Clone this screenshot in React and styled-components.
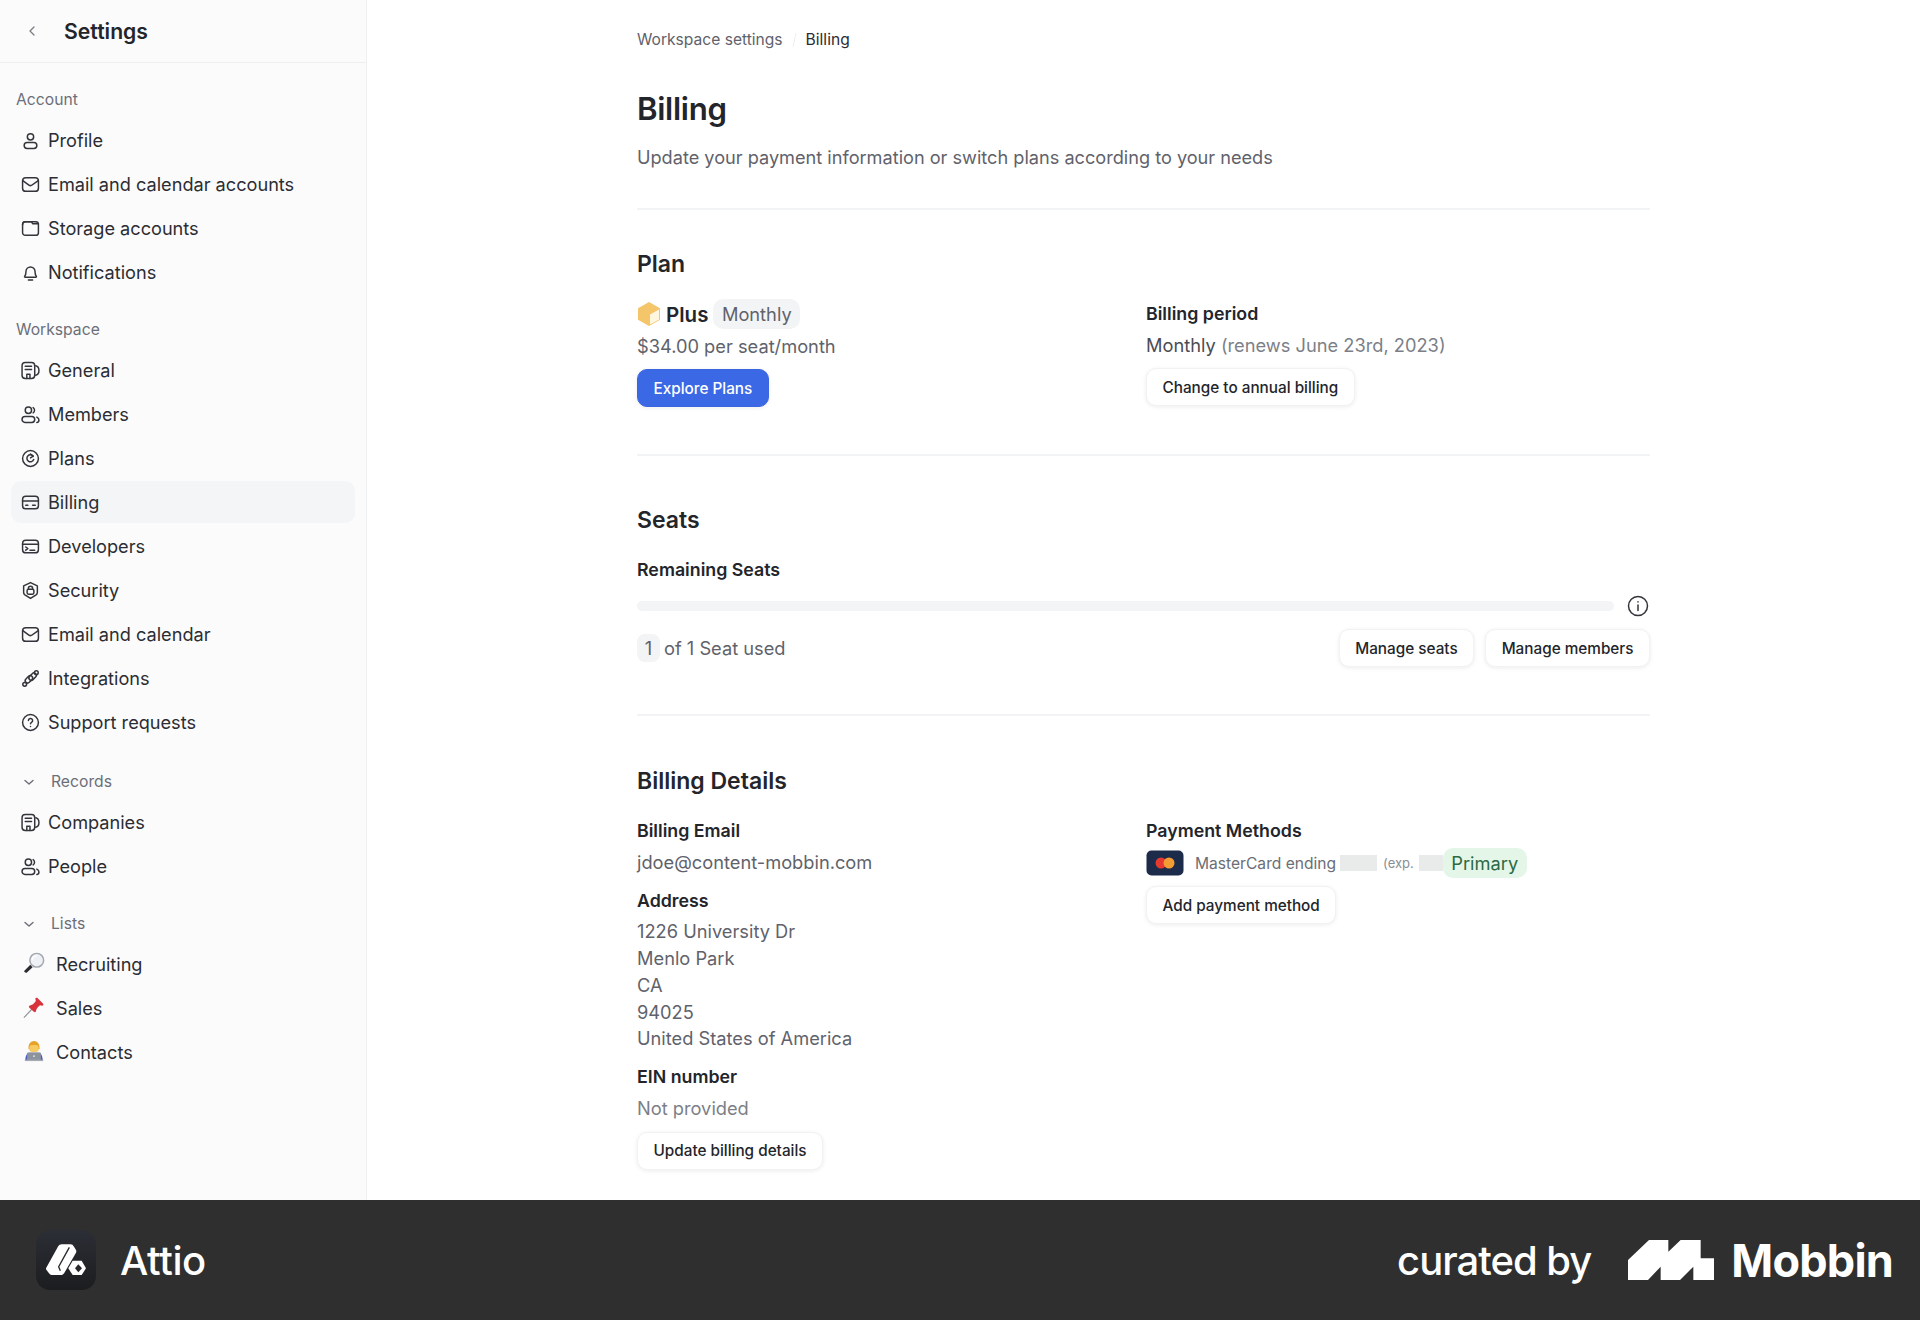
import React from 'react';
import styled, { createGlobalStyle } from 'styled-components';

const Global = createGlobalStyle`
  html, body { margin: 0; padding: 0; background: #fff; }
  body { font-family: Inter, "Noto Sans", sans-serif; color: #23252b; -webkit-font-smoothing: antialiased; }
`;

const Page = styled.div`
  width: 1920px;
  height: 1320px;
  display: flex;
  flex-direction: column;
`;
const Body = styled.div`
  height: 1200px;
  display: flex;
`;
const Sidebar = styled.aside`
  width: 367px;
  flex: none;
  background: #fbfbfc;
  border-right: 1px solid #eeeff1;
  box-sizing: border-box;
`;
const SideHead = styled.div`
  height: 63px;
  box-sizing: border-box;
  border-bottom: 1px solid #eeeff1;
  display: flex;
  align-items: center;
  padding-left: 26px;
  gap: 26px;
  color: #7a7d85;
`;
const SideTitle = styled.div`
  font-size: 21.2px;
  font-weight: 600;
  color: #23252b;
`;
const SideNav = styled.nav`
  padding: 24px 11px 0;
`;
const SectionLabel = styled.div`
  height: 26px;
  line-height: 26px;
  font-size: 15.7px;
  color: #6c6f78;
  padding-left: ${p => (p.$caret ? '12px' : '5px')};
  margin-top: ${p => p.$top || 0}px;
  margin-bottom: 5px;
  display: flex;
  align-items: center;
  gap: 16px;
`;
const Item = styled.div`
  height: 44px;
  display: flex;
  align-items: center;
  gap: ${p => (p.$emoji ? '11px' : '8px')};
  padding-left: 10px;
  font-size: 18.15px;
  color: #2b2d33;
  position: relative;
  z-index: 0;
  ${p => p.$active && `
    &::before {
      content: '';
      position: absolute;
      z-index: -1;
      left: 0; right: 0; top: 1px; bottom: 1px;
      border-radius: 10px;
      background: #f4f5f6;
    }
  `}
`;
const ItemIcon = styled.svg`
  width: 19px;
  height: 19px;
  flex: none;
  fill: none;
  stroke: #33353b;
  stroke-width: 1.4;
  stroke-linecap: round;
  stroke-linejoin: round;
`;
const Emoji = styled.svg`
  width: 22px;
  height: 22px;
  flex: none;
  margin-left: 2px;
  margin-top: -3px;
`;
const Main = styled.main`
  flex: 1;
  padding: 29px 0 0 270px;
`;
const Content = styled.div`
  width: 1013px;
`;
const Crumbs = styled.div`
  display: flex;
  align-items: center;
  font-size: 15.6px;
  line-height: 22px;
  color: #5f626b;
  gap: 11px;
`;
const CrumbCurrent = styled.span`
  color: #2b2d33;
`;
const CrumbSlash = styled.span`
  width: 1px;
  height: 14px;
  background: #eeeff1;
  transform: rotate(12deg);
`;
const H1 = styled.h1`
  margin: 37px 0 0;
  font-size: 31.2px;
  line-height: 42px;
  font-weight: 600;
  letter-spacing: -0.3px;
  color: #23252b;
`;
const Sub = styled.p`
  margin: 13px 0 0;
  font-size: 18.15px;
  line-height: 28px;
  color: #5f626b;
`;
const Section = styled.section`
  border-top: 2px solid #f2f3f4;
  margin-top: ${p => p.$top}px;
`;
const H2 = styled.h2`
  margin: ${p => p.$top || 39}px 0 0;
  font-size: 23px;
  line-height: 30px;
  font-weight: 600;
  color: #23252b;
`;
const Columns = styled.div`
  display: grid;
  grid-template-columns: 509px 504px;
  margin-top: 21px;
`;
const Col = styled.div`
  display: flex;
  flex-direction: column;
  align-items: flex-start;
`;
const Label = styled.div`
  font-size: 17.8px;
  line-height: 28px;
  font-weight: 600;
  color: #23252b;
  margin-top: ${p => p.$top || 0}px;
`;
const Text = styled.div`
  font-size: 18.25px;
  line-height: 26.7px;
  color: #5f626b;
  margin-top: ${p => p.$top || 0}px;
`;
const Dark = styled.span`
  color: #4a4c54;
`;
const Muted = styled.span`
  color: #7c7f87;
`;
const PlanRow = styled.div`
  display: flex;
  align-items: center;
  height: 30px;
  margin-top: -1px;
`;
const PlanName = styled.span`
  font-size: 20.5px;
  font-weight: 600;
  color: #23252b;
  margin: 0 5px 0 5px;
`;
const Tag = styled.span`
  height: 30px;
  line-height: 30px;
  padding: 0 8.5px;
  border-radius: 10px;
  font-size: 18.25px;
  background: ${p => p.$bg || '#f3f4f5'};
  color: ${p => p.$fg || '#5f626b'};
`;
const Button = styled.button`
  height: 38px;
  box-sizing: border-box;
  padding: 0 15.5px;
  font-family: inherit;
  font-size: 15.3px;
  font-weight: 500;
  border-radius: 10px;
  cursor: pointer;
  white-space: nowrap;
  margin-top: ${p => p.$top || 0}px;
  border: 1px solid ${p => (p.$primary ? '#3b66e0' : '#f1f2f3')};
  background: ${p => (p.$primary ? '#3b69e6' : '#fff')};
  color: ${p => (p.$primary ? '#fff' : '#23252b')};
  box-shadow: 0 1px 4px rgba(20, 25, 40, 0.08);
`;
const BarRow = styled.div`
  display: flex;
  align-items: center;
  justify-content: space-between;
  margin-top: 11px;
`;
const Bar = styled.div`
  width: 977px;
  height: 10px;
  border-radius: 5px;
  background: #f3f4f5;
`;
const InfoIcon = styled.svg`
  width: 22px;
  height: 22px;
  margin-right: 1px;
  fill: none;
  stroke: #33353b;
  stroke-width: 1.5;
  stroke-linecap: round;
`;
const SeatRow = styled.div`
  display: flex;
  align-items: center;
  justify-content: space-between;
  margin-top: 12px;
`;
const SeatText = styled.div`
  display: flex;
  align-items: center;
  font-size: 18.25px;
  color: #5f626b;
`;
const SeatCount = styled.span`
  width: 23px;
  height: 28px;
  line-height: 28px;
  text-align: center;
  border-radius: 8px;
  background: #f3f4f5;
  margin-right: 4px;
`;
const SeatButtons = styled.div`
  display: flex;
  gap: 11px;
`;
const PayRow = styled.div`
  display: flex;
  align-items: center;
  height: 30px;
  margin-top: 3px;
`;
const CardIcon = styled.svg`
  width: 38px;
  height: 26px;
  flex: none;
`;
const PayText = styled.span`
  font-size: 15.6px;
  color: #6b6e76;
  margin-left: 11px;
`;
const Redact = styled.span`
  display: inline-block;
  height: 16px;
  width: ${p => p.$w}px;
  background: #e9eaea;
  margin-left: ${p => p.$left}px;
`;
const PayExp = styled.span`
  font-size: 13px;
  color: #8b8e95;
  margin-left: 6px;
`;
const Footer = styled.footer`
  height: 120px;
  background: #2f2f2f;
  display: flex;
  align-items: center;
  justify-content: space-between;
  color: #fff;
  padding: 0 27px 0 36px;
`;
const Brand = styled.div`
  display: flex;
  align-items: center;
  gap: 24px;
`;
const AppLogo = styled.svg`
  width: 60px;
  height: 60px;
  flex: none;
`;
const AppName = styled.div`
  font-size: 40px;
  font-weight: 500;
  letter-spacing: -0.4px;
`;
const Curated = styled.div`
  display: flex;
  align-items: center;
`;
const CuratedText = styled.span`
  font-size: 40px;
  font-weight: 500;
  letter-spacing: -1px;
  margin-right: 37px;
`;
const MobbinMark = styled.svg`
  width: 86px;
  height: 40px;
  margin-right: 17px;
  fill: #fff;
`;
const MobbinName = styled.span`
  font-size: 45px;
  font-weight: 700;
  letter-spacing: -0.8px;
`;

const icons = {
  user: <><circle cx="9" cy="5.5" r="3" /><rect x="3" y="11" width="12" height="5.5" rx="2.75" /></>,
  mail: <><rect x="1.5" y="2.5" width="15" height="13" rx="3" /><path d="M2 5.5l5.5 4a2.5 2.5 0 0 0 3 0l5.5-4" /></>,
  folder: <><rect x="1.5" y="2.5" width="15" height="13" rx="2.5" /><path d="M1.5 5.5c0-1.5 1-3 2.5-3h6l1 2h5.5" /></>,
  bell: <><path d="M3.5 12.5c1-1 1.2-2.2 1.2-4.5a4.3 4.3 0 0 1 8.6 0c0 2.3.2 3.5 1.2 4.5.3.4 0 1-.5 1h-10c-.5 0-.8-.6-.5-1z" /><path d="M7 16h4" /></>,
  building: <><rect x="1" y="1.5" width="12" height="15" rx="3" /><path d="M14 4.500c2 .5 3 2.200 3 4.500s-1 4-3 4.500M4 5h6M4 8h6M5.500 16.500v-4h3v4" /></>,
  users: <><circle cx="7" cy="5" r="3" /><path d="M11.500 2.500a3 3 0 0 1 0 5" /><rect x="1" y="11" width="12" height="5.500" rx="2.750" /><path d="M15 11.500c1 .5 2 1.700 2 2.700 0 1.300-1 2.300-2 2.300" /></>,
  plans: <><circle cx="9" cy="9" r="7.500" /><path d="M11.500 6.800A3.300 3.300 0 1 0 12 10" /><path d="M9 4.800l2.600 2-2.600 1.600" /></>,
  card: <><rect x="1.500" y="3" width="15" height="12" rx="3" /><path d="M1.500 7.500h15M4.500 11.500h2M11 11.500h2.500" /></>,
  dev: <><rect x="1.500" y="3" width="15" height="12" rx="3" /><path d="M1.500 6.800h15M4.500 9.500l2 1.500-2 1.500M8.500 12.500h4.500" /></>,
  shield: <><path d="M9 1.500l6.500 3.200v6.200c0 1-.5 1.700-1.200 2.200L9 16.500l-5.300-3.400c-.7-.5-1.200-1.200-1.200-2.200V4.700z" /><rect x="5.800" y="7.800" width="6.400" height="4.700" rx="1.300" /><path d="M7 7.800V7a2 2 0 0 1 4 0v.8" /></>,
  link: <><rect x="3.500" y="7.500" width="8" height="4.500" rx="2.250" transform="rotate(-45 7.500 9.750)" /><rect x="7" y="5" width="8" height="4.500" rx="2.250" transform="rotate(-45 11 7.250)" /><circle cx="3.500" cy="14.500" r="1.800" /><circle cx="14.500" cy="3.500" r="1.800" /></>,
  help: <><circle cx="9" cy="9" r="7.500" /><path d="M7 7.200a2 2 0 1 1 3 1.700c-.7.4-1 .8-1 1.400" /><path d="M9 12.800v.1" /></>,
};

const Icon = ({ name }) => <ItemIcon viewBox="0 0 18 18">{icons[name]}</ItemIcon>;

const Caret = () => (
  <svg width="12" height="12" viewBox="0 0 12 12" fill="none" stroke="#6c6f78" strokeWidth="1.400" strokeLinecap="round" strokeLinejoin="round">
    <path d="M2 4.500L6 8l4-3.500" />
  </svg>
);

const Magnifier = () => (
  <Emoji viewBox="0 0 24 24">
    <path d="M1.500 20.500l6.500-6.500 2.500 2.500-6.500 6c-1 .9-3.500-.9-2.500-2z" fill="#2c2c30" />
    <circle cx="15" cy="9" r="7.500" fill="#eef1f5" stroke="#a3a8af" strokeWidth="1.600" />
    <path d="M10 9a5 5 0 0 1 5-5" stroke="#fff" strokeWidth="1.600" fill="none" />
  </Emoji>
);
const Pin = () => (
  <Emoji viewBox="0 0 24 24">
    <path d="M1 23.500l9-9.500" stroke="#8d9299" strokeWidth="1.300" />
    <path d="M7 10.500c3-.5 5-2 7-5l-.5-2.500c0-1 1-1.500 2-1l6.500 6.500c.6 1 0 2-1 2l-2.500-.5c-2.500 2-4 4-4.500 7-.4 1-1.500 1-2.200.3L7 12.700c-.7-.7-.8-1.800 0-2.200z" fill="#d8323c" />
  </Emoji>
);
const Coder = () => (
  <Emoji viewBox="0 0 24 24">
    <path d="M6 10C5.500 4 8.500 1 12 1s6.500 3 6 9z" fill="#e5a32a" />
    <rect x="7" y="5.500" width="10" height="7.500" rx="3" fill="#f8cb62" />
    <path d="M2.500 22.500c0-5 2-8.500 4-8.500h11c2 0 4 3.500 4 8.500z" fill="#4c5cc4" />
    <rect x="4.500" y="13.500" width="15" height="8.500" rx="1" fill="#8d939d" />
    <path d="M2 21.500h20v1.500H2z" fill="#a6abb3" />
    <circle cx="12" cy="17.500" r="1" fill="#e8e9ec" />
  </Emoji>
);

const Row = ({ icon, children, active }) => (
  <Item $active={active}><Icon name={icon} />{children}</Item>
);

export default function App() {
  return (
    <Page>
      <Global />
      <Body>
        <Sidebar>
          <SideHead>
            <svg width="12" height="12" viewBox="0 0 12 12" fill="none" stroke="#7a7d85" strokeWidth="1.300" strokeLinecap="round" strokeLinejoin="round"><path d="M8 2L4 6l4 4" /></svg>
            <SideTitle>Settings</SideTitle>
          </SideHead>
          <SideNav>
            <SectionLabel>Account</SectionLabel>
            <Row icon="user">Profile</Row>
            <Row icon="mail">Email and calendar accounts</Row>
            <Row icon="folder">Storage accounts</Row>
            <Row icon="bell">Notifications</Row>
            <SectionLabel $top={23}>Workspace</SectionLabel>
            <Row icon="building">General</Row>
            <Row icon="users">Members</Row>
            <Row icon="plans">Plans</Row>
            <Row icon="card" active>Billing</Row>
            <Row icon="dev">Developers</Row>
            <Row icon="shield">Security</Row>
            <Row icon="mail">Email and calendar</Row>
            <Row icon="link">Integrations</Row>
            <Row icon="help">Support requests</Row>
            <SectionLabel $top={25} $caret><Caret />Records</SectionLabel>
            <Row icon="building">Companies</Row>
            <Row icon="users">People</Row>
            <SectionLabel $top={23} $caret><Caret />Lists</SectionLabel>
            <Item $emoji><Magnifier />Recruiting</Item>
            <Item $emoji><Pin />Sales</Item>
            <Item $emoji><Coder />Contacts</Item>
          </SideNav>
        </Sidebar>
        <Main>
          <Content>
            <Crumbs>Workspace settings<CrumbSlash /><CrumbCurrent>Billing</CrumbCurrent></Crumbs>
            <H1>Billing</H1>
            <Sub>Update your payment information or switch plans according to your needs</Sub>
            <Section $top={37}>
              <H2>Plan</H2>
              <Columns>
                <Col>
                  <PlanRow>
                    <svg width="24" height="26" viewBox="0 0 24 26">
                      <path d="M12 1l11 6.300v11.400L12 25 1 18.700V7.300z" fill="#f5c56a" />
                      <path d="M22 8.500v10L13 23.500V13.500z" fill="#fff6e0" />
                    </svg>
                    <PlanName>Plus</PlanName>
                    <Tag>Monthly</Tag>
                  </PlanRow>
                  <Text $top={3.500}>$34.00 per seat/month</Text>
                  <Button $primary $top={10}>Explore Plans</Button>
                </Col>
                <Col>
                  <Label>Billing period</Label>
                  <Text $top={3.500}><Dark>Monthly</Dark> <Muted>(renews June 23rd, 2023)</Muted></Text>
                  <Button $top={10}>Change to annual billing</Button>
                </Col>
              </Columns>
            </Section>
            <Section $top={47}>
              <H2 $top={49}>Seats</H2>
              <Label $top={21}>Remaining Seats</Label>
              <BarRow>
                <Bar />
                <InfoIcon viewBox="0 0 22 22"><circle cx="11" cy="11" r="9.500" /><path d="M11 10v5.500M11 6.800v.1" /></InfoIcon>
              </BarRow>
              <SeatRow>
                <SeatText><SeatCount>1</SeatCount>of 1 Seat used</SeatText>
                <SeatButtons>
                  <Button>Manage seats</Button>
                  <Button>Manage members</Button>
                </SeatButtons>
              </SeatRow>
            </Section>
            <Section $top={47}>
              <H2 $top={50}>Billing Details</H2>
              <Columns>
                <Col>
                  <Label>Billing Email</Label>
                  <Text $top={3.500}>jdoe@content-mobbin.com</Text>
                  <Label $top={11.500}>Address</Label>
                  <Text $top={3.500}>1226 University Dr<br />Menlo Park<br />CA<br />94025<br />United States of America</Text>
                  <Label $top={11.500}>EIN number</Label>
                  <Text $top={3.500}><Muted>Not provided</Muted></Text>
                  <Button $top={10}>Update billing details</Button>
                </Col>
                <Col>
                  <Label>Payment Methods</Label>
                  <PayRow>
                    <CardIcon viewBox="0 0 38 26">
                      <rect x="0.500" y="0.500" width="37" height="25" rx="5" fill="#1c2b4a" />
                      <circle cx="15" cy="13" r="5.500" fill="#e5392f" />
                      <circle cx="23" cy="13" r="5.500" fill="#f39c34" />
                    </CardIcon>
                    <PayText>MasterCard ending</PayText>
                    <Redact $w={37} $left={4} />
                    <PayExp>(exp.</PayExp>
                    <Redact $w={24} $left={5} />
                    <Tag $bg="#e4f6e7" $fg="#2b6a45">Primary</Tag>
                  </PayRow>
                  <Button $top={8}>Add payment method</Button>
                </Col>
              </Columns>
            </Section>
          </Content>
        </Main>
      </Body>
      <Footer>
        <Brand>
          <AppLogo viewBox="18 30 180 180">
            <defs>
              <linearGradient id="appBg" x1="0" y1="0" x2="0" y2="1">
                <stop offset="0" stopColor="#2b2e35" />
                <stop offset="1" stopColor="#1c1d1f" />
              </linearGradient>
            </defs>
            <rect x="18" y="30" width="180" height="180" rx="42" fill="url(#appBg)" />
            <path d="M48 145L85 78Q88 73 95 73H122Q128 73 132 80L138 90Q140 94 138 98L105 155Q100 165 92 165H65Q60 165 57 160L48 148Z" fill="#fff" />
            <path d="M118 82L86 140L91 152" fill="none" stroke="#26282c" strokeWidth="4" />
            <path d="M115 145L128 122H155L168 145L155 165H128Z" fill="#fff" />
            <path d="M145 133L156 145L145 157L135 145Z" fill="#26282c" />
          </AppLogo>
          <AppName>Attio</AppName>
        </Brand>
        <Curated>
          <CuratedText>curated by</CuratedText>
          <MobbinMark viewBox="22 15 258 120">
            <path d="M22 75L85 15H143V50L180 15H240V70H280V135H218V95L178 135H120V95L82 135H22Z" />
          </MobbinMark>
          <MobbinName>Mobbin</MobbinName>
        </Curated>
      </Footer>
    </Page>
  );
}
